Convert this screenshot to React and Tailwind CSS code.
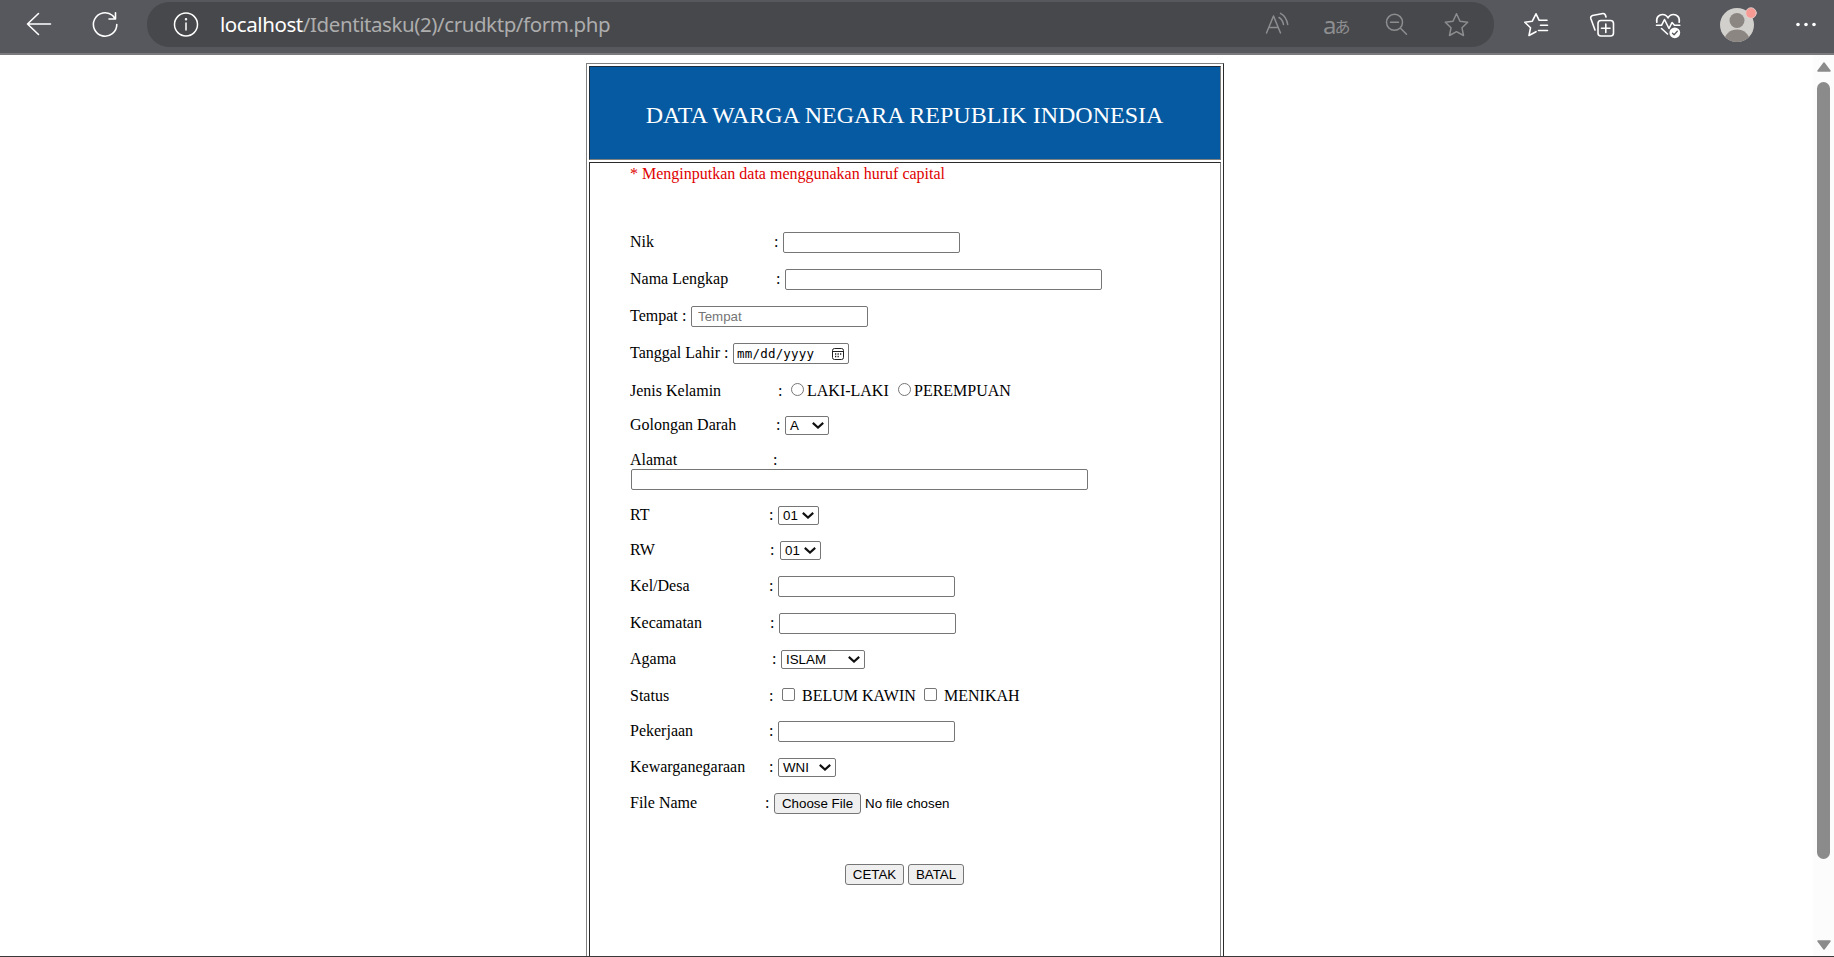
const serif = "font-['Liberation_Serif','Times_New_Roman',serif]";

function Chevron() {
  return (
    <svg width="12" height="7" viewBox="0 0 12 7" className="shrink-0" fill="none" stroke="#101010" strokeWidth="2.1">
      <path d="M0.8 0.9 6 5.6 11.2 0.9" />
    </svg>
  );
}

function Select({ value, w }) {
  return (
    <div className={`flex h-[19px] items-center justify-between rounded-[2px] border border-[#767676] bg-white pr-[4px] pl-1 text-[13.333px] leading-[17px] text-black font-['Liberation_Sans',Arial,sans-serif] ${w}`}>
      <span>{value}</span>
      <Chevron />
    </div>
  );
}

function Field({ w, placeholder }) {
  return (
    <input
      type="text"
      placeholder={placeholder}
      className={`block h-[21px] rounded-[2px] border border-[#767676] bg-white px-[6px] text-[13.333px] placeholder:text-[#757575] font-['Liberation_Sans',Arial,sans-serif] ${w}`}
    />
  );
}

function Row({ label, mt, labelW, colonW, tall, children }) {
  return (
    <div className={`flex items-start whitespace-pre ${mt} ${tall ? "h-[21px] leading-[20px]" : "h-[19px] leading-[18px]"}`}>
      <span className={`-ml-px shrink-0 ${labelW}`}>{label}</span>
      <span className={`shrink-0 ${colonW}`}>:</span>
      {children}
    </div>
  );
}

function Button({ children, w }) {
  return (
    <button className={`h-[21px] rounded-[3px] border border-[#767676] bg-[#efefef] text-center text-[13.333px] leading-[19px] text-black whitespace-nowrap font-['Liberation_Sans',Arial,sans-serif] ${w}`}>
      {children}
    </button>
  );
}

function Toolbar() {
  return (
    <header className="flex h-[55px] shrink-0 items-start border-b-2 border-[#7b7b7e] bg-[#57585d]">
      <svg width="147" height="48" viewBox="0 0 147 48" fill="none" stroke="#fff" strokeWidth="1.6" strokeLinecap="round" strokeLinejoin="round" className="shrink-0">
        <path d="M50.5 24H27.5M38.5 13.5 27.5 24l11 10.5" />
        <path d="M116.8 24.5A11.7 11.7 0 1 1 112.6 15.5L115 18.5M115.5 12.8V19H109" />
      </svg>
      <div className="mt-0.5 flex h-[45px] w-[1347px] shrink-0 items-center rounded-[22px] bg-[#47484b]">
        <svg width="74" height="45" viewBox="147 2 74 45" fill="none" stroke="#fff" strokeWidth="1.5" strokeLinecap="round" className="shrink-0">
          <circle cx="186" cy="24.5" r="11.5" />
          <path d="M186 23v7" />
          <circle cx="186" cy="19.3" r="0.5" />
        </svg>
        <div className="-ml-px w-[1038px] text-[20.5px] leading-[45px] tracking-[-0.42px] whitespace-nowrap text-[#adadae] font-['Noto_Sans','Open_Sans',sans-serif]">
          <span className="text-white">localhost</span>/Identitasku(2)/crudktp/form.php
        </div>
        <svg width="60" height="45" viewBox="1258 2 60 45" fill="none" stroke="#8d8e90" strokeWidth="1.5" strokeLinecap="round" strokeLinejoin="round" className="shrink-0">
          <path d="M1266.5 33 1273.5 16 1280.5 33M1269 27.5h9M1279 17.5Q1282.5 19.500 1283.500 24.5M1280.500 13.3Q1286.500 16.5 1287.7 24.5" />
        </svg>
        <div className="flex w-[60px] shrink-0 items-baseline pl-[5px] text-[#8d8e90]">
          <span className="text-[24px] leading-[45px] font-['Noto_Sans',sans-serif]">a</span>
          <span className="-ml-px text-[15px] leading-[30px] font-['Noto_Sans_CJK_JP',sans-serif]"><span className="relative -top-px -left-px text-[16px]">あ</span></span>
        </div>
        <svg width="110" height="45" viewBox="1378 2 110 45" fill="none" stroke="#8d8e90" strokeWidth="1.5" strokeLinecap="round" strokeLinejoin="round" className="shrink-0">
          <circle cx="1394.5" cy="22.3" r="8" />
          <path d="M1400.5 28.3 1406.5 34.3M1390.5 22.3h8" />
          <path d="M1456.5 13.8 1460 21.2 1467.7 22.2 1462 27.8 1463.5 35.5 1456.5 31.7 1449.5 35.5 1451 27.8 1445.3 22.2 1453 21.2Z" />
        </svg>
      </div>
      <svg width="340" height="48" viewBox="1494 0 340 48" fill="none" stroke="#fff" strokeWidth="1.6" strokeLinecap="round" strokeLinejoin="round" className="shrink-0">
        <path d="M1536 31.7 1529 35.5 1530.5 27.8 1524.8 22.2 1532.3 21.2 1536 13.8 1539.2 20.3H1547M1540.5 25.3H1547.5M1538.5 30.5H1547.5" />
        <rect x="1598" y="20.5" width="15.5" height="15.5" rx="3" />
        <path d="M1605.8 24v8.5M1601.5 28.2h8.5M1595 30 1590.8 18.5Q1590.3 16.3 1592.5 15.5L1603 13.5Q1605.3 13.3 1606 17" />
        <path d="M1656.800 22.300C1655.800 17 1659.500 14.500 1662.500 14.500C1665 14.500 1667 16 1668 18C1669 16 1671 14.500 1673.500 14.500C1676.500 14.500 1680.200 17 1679.200 22.300M1656.500 25.3H1661.500L1664.500 19.500 1669 28.500 1672 22.500 1674.500 25.3H1679.800M1661.5 28.5 1667.500 34" />
        <circle cx="1674.800" cy="32.800" r="5.4" fill="#fff" stroke="none" />
        <path d="M1672.5 33.2 1674.1 34.7 1677.3 31.2" stroke="#57585d" strokeWidth="1.3" />
        <g stroke="none">
          <clipPath id="av"><circle cx="1737" cy="25" r="17" /></clipPath>
          <circle cx="1737" cy="25" r="17" fill="#d2d0cd" />
          <g clipPath="url(#av)" fill="#8b8682">
            <circle cx="1737" cy="20.5" r="7.5" />
            <ellipse cx="1737" cy="40.500" rx="12.500" ry="11" />
          </g>
          <circle cx="1751" cy="13" r="5.3" fill="#f79a94" stroke="#e6d3cf" strokeWidth="0.8" />
          <g fill="#fff">
            <circle cx="1798" cy="24.5" r="1.8" />
            <circle cx="1806" cy="24.5" r="1.8" />
            <circle cx="1814" cy="24.5" r="1.8" />
          </g>
        </g>
      </svg>
    </header>
  );
}

function Form() {
  return (
    <div className="pl-10">
      <p className="mt-px -ml-px h-[18px] leading-[19px] text-[#e00000]">* Menginputkan data menggunakan huruf capital</p>
      <Row label="Nik" mt="mt-[50px]" labelW="w-[144px]" colonW="w-[9px]" tall><Field w="w-[177px]" /></Row>
      <Row label="Nama Lengkap" mt="mt-4" labelW="w-[146px]" colonW="w-[9px]" tall><Field w="w-[317px]" /></Row>
      <Row label="Tempat" mt="mt-4" labelW="w-[52px]" colonW="w-[9px]" tall><Field w="w-[177px]" placeholder="Tempat" /></Row>
      <Row label="Tanggal Lahir" mt="mt-4" labelW="w-[94px]" colonW="w-[9px]" tall>
        <div className="flex h-[21px] w-[116px] items-center justify-between rounded-[2px] border border-[#767676] pr-1 pl-[3px]">
          <span className="text-[12.5px] leading-[19px] tracking-[0.2px] font-['DejaVu_Sans_Mono','Liberation_Mono',monospace]">mm/dd/yyyy</span>
          <svg width="12" height="12" viewBox="0 0 12 12" fill="none" stroke="#202020" strokeWidth="1">
            <rect x="0.5" y="0.5" width="11" height="11" rx="2" />
            <path d="M0.5 3.5h11" />
            <path d="M5.500 6h1.3M8 6h1.3M3 8.5h1.3M5.5 8.5h1.3M3 6h1.300" strokeWidth="1.3" />
          </svg>
        </div>
      </Row>
      <Row label="Jenis Kelamin" mt="mt-[18px]" labelW="w-[148px]" colonW="w-[13px]">
        <span className="mt-px mr-[3px] size-[13px] rounded-full border border-[#767676]" />
        <span className="w-[91px]">LAKI-LAKI</span>
        <span className="mt-px mr-[3px] size-[13px] rounded-full border border-[#767676]" />
        <span>PEREMPUAN</span>
      </Row>
      <Row label="Golongan Darah" mt="mt-[15px]" labelW="w-[146px]" colonW="w-[9px]"><Select value="A" w="w-[44px]" /></Row>
      <Row label="Alamat" mt="mt-4" labelW="w-[143px]" colonW="w-2" />
      <div className="-mt-px"><Field w="w-[457px]" /></div>
      <Row label="RT" mt="mt-4" labelW="w-[139px]" colonW="w-[9px]"><Select value="01" w="w-[41px]" /></Row>
      <Row label="RW" mt="mt-4" labelW="w-[140px]" colonW="w-[10px]"><Select value="01" w="w-[41px]" /></Row>
      <Row label="Kel/Desa" mt="mt-4" labelW="w-[139px]" colonW="w-[9px]" tall><Field w="w-[177px]" /></Row>
      <Row label="Kecamatan" mt="mt-4" labelW="w-[140px]" colonW="w-[9px]" tall><Field w="w-[177px]" /></Row>
      <Row label="Agama" mt="mt-4" labelW="w-[142px]" colonW="w-[9px]"><Select value="ISLAM" w="w-[84px]" /></Row>
      <Row label="Status" mt="mt-[18px]" labelW="w-[139px]" colonW="w-[13px]">
        <span className="mt-px mr-[7px] size-[13px] rounded-[2px] border border-[#767676]" />
        <span className="w-[122px]">BELUM KAWIN</span>
        <span className="mt-px mr-[7px] size-[13px] rounded-[2px] border border-[#767676]" />
        <span>MENIKAH</span>
      </Row>
      <Row label="Pekerjaan" mt="mt-[15px]" labelW="w-[139px]" colonW="w-[9px]" tall><Field w="w-[177px]" /></Row>
      <Row label="Kewarganegaraan" mt="mt-4" labelW="w-[139px]" colonW="w-[9px]"><Select value="WNI" w="w-[58px]" /></Row>
      <Row label="File Name" mt="mt-4" labelW="w-[135px]" colonW="w-[9px]" tall>
        <Button w="w-[87px]">Choose File</Button>
        <span className="ml-1 text-[13.333px] leading-[22px] font-['Liberation_Sans',Arial,sans-serif]">No file chosen</span>
      </Row>
      <div className="mt-[50px] flex gap-1 pl-[214px]">
        <Button w="w-[59px]">CETAK</Button>
        <Button w="w-[56px]">BATAL</Button>
      </div>
    </div>
  );
}

export default function App() {
  return (
    <div className="flex h-[957px] w-[1834px] flex-col overflow-hidden border-b border-[#3c383a] bg-white text-black">
      <Toolbar />
      <div className="flex min-h-0 flex-1">
        <main className={`min-w-0 flex-1 overflow-hidden pt-2 pl-[586px] text-[16px] ${serif}`}>
          <div className="h-[1000px] w-[638px] border border-t-[#808080] border-r-[#2b2b2b] border-b-[#2b2b2b] border-l-[#808080] p-[2px]">
            <div className="flex h-[94px] items-center justify-center border border-t-[#1c2c3c] border-r-[#808080] border-b-[#808080] border-l-[#1c2c3c] bg-[#065aa2]">
              <h1 className="pt-1 pr-px text-[24px] leading-[28px] whitespace-nowrap text-white">DATA WARGA NEGARA REPUBLIK INDONESIA</h1>
            </div>
            <div className="mt-[2px] h-[896px] border border-t-[#2b2b2b] border-r-[#808080] border-b-[#808080] border-l-[#2b2b2b] pl-px">
              <Form />
            </div>
          </div>
        </main>
        <div className="flex w-[21px] shrink-0 flex-col items-center bg-[#fcfcfc] pt-[7px]">
          <svg width="14" height="10" viewBox="0 0 14 10"><path d="M7 1 13 9H1Z" fill="#8b8b8b" stroke="#8b8b8b" strokeWidth="1.5" strokeLinejoin="round" /></svg>
          <div className="mt-[10px] h-[777px] w-[13px] rounded-full bg-[#8b8b8b]" />
          <svg width="14" height="10" viewBox="0 0 14 10" className="mt-[81px]"><path d="M7 9 13 1H1Z" fill="#8b8b8b" stroke="#8b8b8b" strokeWidth="1.5" strokeLinejoin="round" /></svg>
        </div>
      </div>
    </div>
  );
}
